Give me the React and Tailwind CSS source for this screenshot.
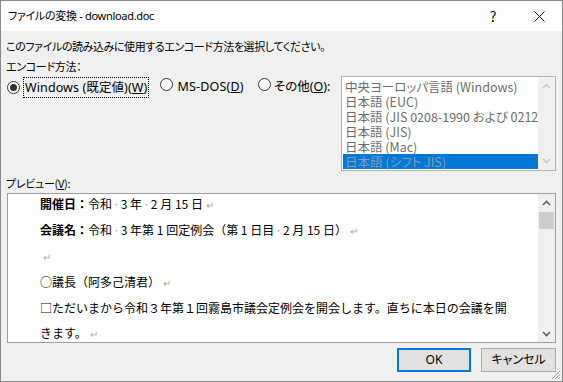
import React from "react";

const cjk = '"Noto Sans CJK JP", sans-serif';
const ui = '"Noto Sans", "Noto Sans CJK JP", sans-serif';

const Radio = ({ checked }) => (
  <span className="inline-flex w-[13px] h-[13px] rounded-full border border-[#333333] bg-white items-center justify-center shrink-0">
    {checked && <span className="w-[7px] h-[7px] rounded-full bg-[#333333]" />}
  </span>
);

const Ret = () => <span className="text-[#a6a6a6] text-[10px] ml-[3px]">↵</span>;
const Dot = () => <span className="text-[#a6a6a6] mx-[1px]">·</span>;

const Chevron = ({ up, color }) => (
  <svg width="9" height="6" viewBox="0 0 9 6">
    <path
      d={up ? "M1 5 L4.5 1.5 L8 5" : "M1 1 L4.5 4.5 L8 1"}
      fill="none"
      stroke={color}
      strokeWidth="1.6"
    />
  </svg>
);

const encodings = [
  "中央ヨーロッパ言語 (Windows)",
  "日本語 (EUC)",
  "日本語 (JIS 0208-1990 および 0212",
  "日本語 (JIS)",
  "日本語 (Mac)",
  "日本語 (シフト JIS)",
];

export default function App() {
  return (
    <div
      className="w-[563px] h-[382px] border border-[#8a8a8a] bg-[#f0f0f0] flex flex-col text-[12px] text-black relative overflow-hidden"
      style={{ fontFamily: cjk, fontFeatureSettings: '"palt"' }}
    >
      {/* title bar */}
      <div className="h-[30px] bg-white flex items-center shrink-0">
        <span className="pl-[7px] flex-1 text-[11px] tracking-[-0.3px]" style={{ fontFamily: ui }}>
          ファイルの変換 - download.doc
        </span>
        <span className="w-[46px] h-[30px] flex items-center justify-center text-[14px]">?</span>
        <span className="w-[46px] h-[30px] flex items-center justify-center">
          <svg width="11" height="11" viewBox="0 0 11 11">
            <path d="M0.5 0.5 L10.5 10.5 M10.5 0.5 L0.5 10.5" stroke="#111" strokeWidth="1" />
          </svg>
        </span>
      </div>

      {/* body */}
      <div className="flex-1 flex flex-col pl-[5px] pr-[6px]">
        <div className="mt-[7px] h-[16px] leading-[16px] text-[11px] tracking-[-0.4px]">
          このファイルの読み込みに使用するエンコード方法を選択してください。
        </div>
        <div className="mt-[4px] h-[16px] leading-[16px] text-[11px] tracking-[-0.3px]">エンコード方法：</div>

        <div className="mt-[2px] flex items-start">
          <div className="flex items-center h-[21px] mt-[1px] pl-[1px] text-[12.5px]" style={{ fontFamily: ui }}>
            <Radio checked />
            <span className="ml-[3px] border border-dotted border-black px-[1px] h-[21px] leading-[19px] tracking-[0.1px]">
              Windows (既定値)(<u>W</u>)
            </span>
            <span className="ml-[11px]"><Radio /></span>
            <span className="ml-[4px] tracking-[0.2px]">MS-DOS(<u>D</u>)</span>
            <span className="ml-[14px]"><Radio /></span>
            <span className="ml-[3px]">その他(<u>O</u>):</span>
          </div>

          <div className="ml-auto w-[215px] h-[95px] border border-[#b4b4b4] bg-white flex">
            <div className="flex-1 pt-[2px] pl-[1px] overflow-hidden">
              {encodings.map((e, i) => (
                <div
                  key={e}
                  className={`h-[15px] leading-[15px] pl-[2px] whitespace-nowrap text-[12.5px] ${
                    i === encodings.length - 1 ? "bg-[#0078d7] text-[#8a9bb0]" : "text-[#6d6d6d]"
                  }`}
                >
                  {e}
                </div>
              ))}
            </div>
            <div className="w-[17px] bg-[#f0f0f0] flex flex-col items-center justify-between py-[6px]">
              <Chevron up color="#c8c8c8" />
              <Chevron color="#c8c8c8" />
            </div>
          </div>
        </div>

        <div className="mt-[4px] h-[16px] leading-[16px] text-[11px] tracking-[-0.3px]">
          プレビュー(<u>V</u>):
        </div>

        <div className="mt-[2px] ml-[1px] h-[150px] border border-[#a0a0a0] bg-white flex">
          <div
            className="flex-1 pl-[32px] -mt-[3px] leading-[25px] text-[12px] tracking-[0px] text-black overflow-hidden"
            style={{ fontFeatureSettings: "normal" }}
          >
            <div>
              <span className="font-semibold">開催日：</span>令和<Dot />3 年<Dot />2 月 15 日<Ret />
            </div>
            <div>
              <span className="font-semibold">会議名：</span>令和<Dot />3 年第 1 回定例会（第 1 日目<Dot />2 月 15 日）<Ret />
            </div>
            <div>
              <Ret />
            </div>
            <div>
              ○議長（阿多己清君）<Ret />
            </div>
            <div className="whitespace-nowrap">
              □ただいまから令和３年第１回霧島市議会定例会を開会します。直ちに本日の会議を開
            </div>
            <div>
              きます。<Ret />
            </div>
          </div>
          <div className="w-[17px] bg-[#f0f0f0] flex flex-col items-center">
            <div className="h-[17px] flex items-center justify-center">
              <Chevron up color="#606060" />
            </div>
            <div className="w-[15px] h-[17px] bg-[#cdcdcd] mt-[1px]" />
            <div className="flex-1" />
            <div className="h-[17px] flex items-center justify-center">
              <Chevron color="#606060" />
            </div>
          </div>
        </div>

        <div className="mt-[5px] flex justify-end gap-[10px]" style={{ fontFamily: ui }}>
          <button className="w-[74px] h-[24px] border-2 border-[#0078d7] bg-[#e1e1e1] text-[12px]">
            OK
          </button>
          <button className="w-[75px] h-[24px] border border-[#adadad] bg-[#e1e1e1] text-[12px]">
            キャンセル
          </button>
        </div>
      </div>

      {/* size grip */}
      <svg className="absolute right-[1px] bottom-[1px]" width="12" height="12" viewBox="0 0 12 12">
        <path d="M11 3 L3 11 M11 6 L6 11 M11 9 L9 11" stroke="#a0a0a0" strokeWidth="1" />
      </svg>
    </div>
  );
}
